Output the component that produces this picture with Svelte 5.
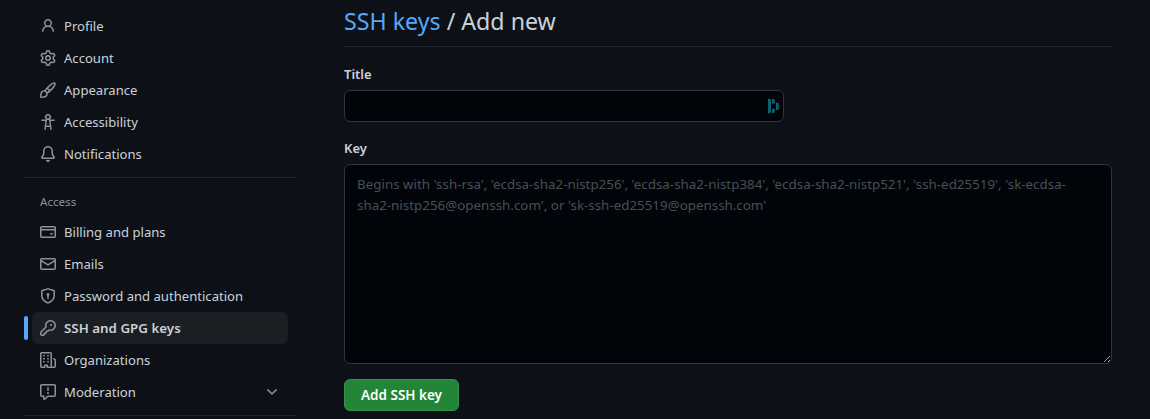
<script>
  const account = [
    { label: 'Profile', icon: 'M10.561 8.073a6.005 6.005 0 0 1 3.432 5.142.75.75 0 1 1-1.498.07 4.5 4.5 0 0 0-8.99 0 .75.75 0 0 1-1.498-.07 6.004 6.004 0 0 1 3.431-5.142 3.999 3.999 0 1 1 5.123 0ZM10.5 5a2.5 2.5 0 1 0-5 0 2.5 2.5 0 0 0 5 0Z' },
    { label: 'Account', icon: 'M8 0a8.2 8.2 0 0 1 .701.031C9.444.095 9.99.645 10.16 1.29l.288 1.107c.018.066.079.158.212.224.231.114.454.243.668.386.123.082.233.09.299.071l1.103-.303c.644-.176 1.392.021 1.82.63.27.385.506.792.704 1.218.315.675.111 1.422-.364 1.891l-.814.806c-.049.048-.098.147-.088.294.016.257.016.515 0 .772-.01.147.038.246.088.294l.814.806c.475.469.679 1.216.364 1.891a7.977 7.977 0 0 1-.704 1.217c-.428.61-1.176.807-1.82.63l-1.102-.302c-.067-.019-.177-.011-.3.071a5.909 5.909 0 0 1-.668.386c-.133.066-.194.158-.211.224l-.29 1.106c-.168.646-.715 1.196-1.458 1.26a8.006 8.006 0 0 1-1.402 0c-.743-.064-1.289-.614-1.458-1.26l-.289-1.106c-.018-.066-.079-.158-.212-.224a5.738 5.738 0 0 1-.668-.386c-.123-.082-.233-.09-.299-.071l-1.103.303c-.644.176-1.392-.021-1.82-.63a8.12 8.12 0 0 1-.704-1.218c-.315-.675-.111-1.422.363-1.891l.815-.806c.05-.048.098-.147.088-.294a6.214 6.214 0 0 1 0-.772c.01-.147-.038-.246-.088-.294l-.815-.806C.635 6.045.431 5.298.746 4.623a7.92 7.92 0 0 1 .704-1.217c.428-.61 1.176-.807 1.82-.63l1.102.302c.067.019.177.011.3-.071.214-.143.437-.272.668-.386.133-.066.194-.158.211-.224l.29-1.106C6.009.645 6.556.095 7.299.03 7.53.01 7.764 0 8 0Zm-.571 1.525c-.036.003-.108.036-.137.146l-.289 1.105c-.147.561-.549.967-.998 1.189-.173.086-.34.183-.5.29-.417.278-.97.423-1.529.27l-1.103-.303c-.109-.03-.175.016-.195.045-.22.312-.412.644-.573.99-.014.031-.021.11.059.19l.815.806c.411.406.562.957.53 1.456a4.709 4.709 0 0 0 0 .582c.032.499-.119 1.05-.53 1.456l-.815.806c-.081.08-.073.159-.059.19.162.346.353.677.573.989.02.03.085.076.195.046l1.102-.303c.56-.153 1.113-.008 1.53.27.161.107.328.204.501.29.447.222.85.629.997 1.189l.289 1.105c.029.109.101.143.137.146a6.6 6.6 0 0 0 1.142 0c.036-.003.108-.036.137-.146l.289-1.105c.147-.561.549-.967.998-1.189.173-.086.34-.183.5-.29.417-.278.97-.423 1.529-.27l1.103.303c.109.029.175-.016.195-.045.22-.313.411-.644.573-.99.014-.031.021-.11-.059-.19l-.815-.806c-.411-.406-.562-.957-.53-1.456a4.709 4.709 0 0 0 0-.582c-.032-.499.119-1.05.53-1.456l.815-.806c.081-.08.073-.159.059-.19a6.464 6.464 0 0 0-.573-.989c-.02-.03-.085-.076-.195-.046l-1.102.303c-.56.153-1.113.008-1.53-.27a4.44 4.44 0 0 0-.501-.29c-.447-.222-.85-.629-.997-1.189l-.289-1.105c-.029-.11-.101-.143-.137-.146a6.6 6.6 0 0 0-1.142 0ZM11 8a3 3 0 1 1-6 0 3 3 0 0 1 6 0ZM9.5 8a1.5 1.5 0 1 0-3.001.001A1.5 1.5 0 0 0 9.5 8Z' },
    { label: 'Appearance', icon: 'M11.134 1.535c.7-.509 1.416-.942 2.076-1.155.649-.21 1.463-.267 2.069.34.603.601.568 1.411.368 2.07-.202.668-.624 1.39-1.125 2.096-1.011 1.424-2.496 2.987-3.775 4.249-1.098 1.084-2.132 1.839-3.04 2.3a3.744 3.744 0 0 1-1.055 3.217c-.431.431-1.065.691-1.657.861-.614.177-1.294.287-1.914.357A21.151 21.151 0 0 1 .797 16H.743l.007-.75H.749L.742 16a.75.75 0 0 1-.743-.742l.743-.008-.742.007v-.054a21.25 21.25 0 0 1 .13-2.284c.067-.647.187-1.287.358-1.914.17-.591.43-1.226.86-1.657a3.746 3.746 0 0 1 3.227-1.054c.466-.893 1.225-1.907 2.314-2.982 1.271-1.255 2.833-2.75 4.246-3.777ZM1.62 13.089c-.051.464-.086.929-.104 1.395.466-.018.932-.053 1.396-.104a10.511 10.511 0 0 0 1.668-.309c.526-.151.856-.325 1.011-.48a2.25 2.25 0 1 0-3.182-3.182c-.155.155-.329.485-.48 1.01a10.515 10.515 0 0 0-.309 1.67Zm10.396-10.34c-1.224.89-2.605 2.189-3.822 3.384l1.718 1.718c1.21-1.205 2.51-2.597 3.387-3.833.47-.662.78-1.227.912-1.662.134-.444.032-.551.009-.575h-.001V1.78c-.014-.014-.113-.113-.548.027-.432.14-.995.462-1.655.942Zm-4.832 7.266-.001.001a9.859 9.859 0 0 0 1.63-1.142L7.155 7.216a9.7 9.7 0 0 0-1.161 1.607c.482.302.889.71 1.19 1.192Z' },
    { label: 'Accessibility', icon: 'M9.923 5.302c.063.063.122.129.178.198H14A.75.75 0 0 1 14 7h-3.3l.578 5.163.362 2.997a.75.75 0 0 1-1.49.18L9.868 13H6.132l-.282 2.34a.75.75 0 0 1-1.49-.18l.362-2.997L5.3 7H2a.75.75 0 0 1 0-1.5h3.9a2.54 2.54 0 0 1 .176-.198 3 3 0 1 1 3.847 0ZM9.2 7.073h-.001a1.206 1.206 0 0 0-2.398 0L6.305 11.5h3.39ZM9.5 3a1.5 1.5 0 1 0-3.001.001A1.5 1.5 0 0 0 9.5 3Z' },
    { label: 'Notifications', icon: 'M8 16a2 2 0 0 0 1.985-1.75c.017-.137-.097-.25-.235-.25h-3.5c-.138 0-.252.113-.235.25A2 2 0 0 0 8 16ZM3 5a5 5 0 0 1 10 0v2.947c0 .05.015.098.042.139l1.703 2.555A1.519 1.519 0 0 1 13.482 13H2.518a1.516 1.516 0 0 1-1.263-2.36l1.703-2.554A.255.255 0 0 0 3 7.947Zm5-3.5A3.5 3.5 0 0 0 4.5 5v2.947c0 .346-.102.683-.294.97l-1.703 2.556a.017.017 0 0 0-.003.01l.001.006c0 .002.002.004.004.006l.006.004.007.001h10.964l.007-.001.006-.004.004-.006.001-.007a.017.017 0 0 0-.003-.01l-1.703-2.554a1.745 1.745 0 0 1-.294-.97V5A3.5 3.5 0 0 0 8 1.5Z' }
  ];

  const access = [
    { label: 'Billing and plans', icon: 'M10.75 9a.75.75 0 0 0 0 1.5h1.5a.75.75 0 0 0 0-1.5h-1.5ZM0 3.75C0 2.784.784 2 1.75 2h12.5c.966 0 1.75.784 1.75 1.75v8.5A1.75 1.75 0 0 1 14.25 14H1.75A1.75 1.75 0 0 1 0 12.25ZM14.5 6.5h-13v5.75c0 .138.112.25.25.25h12.5a.25.25 0 0 0 .25-.25Zm0-2.75a.25.25 0 0 0-.25-.25H1.75a.25.25 0 0 0-.25.25V5h13Z' },
    { label: 'Emails', icon: 'M1.75 2h12.5c.966 0 1.75.784 1.75 1.75v8.5A1.75 1.75 0 0 1 14.25 14H1.75A1.75 1.75 0 0 1 0 12.25v-8.5C0 2.784.784 2 1.75 2ZM1.5 12.251c0 .138.112.25.25.25h12.5a.25.25 0 0 0 .25-.25V5.809L8.38 9.397a.75.75 0 0 1-.76 0L1.5 5.809v6.442Zm13-8.181v-.32a.25.25 0 0 0-.25-.25H1.75a.25.25 0 0 0-.25.25v.32L8 7.88Z' },
    { label: 'Password and authentication', icon: 'm8.533.133 5.25 1.68A1.75 1.75 0 0 1 15 3.48V7c0 1.566-.32 3.182-1.303 4.682-.983 1.498-2.585 2.813-5.032 3.855a1.697 1.697 0 0 1-1.33 0c-2.447-1.042-4.049-2.357-5.032-3.855C1.32 10.182 1 8.566 1 7V3.48a1.75 1.75 0 0 1 1.217-1.667l5.25-1.68a1.748 1.748 0 0 1 1.066 0Zm-.61 1.429.001.001-5.25 1.68a.251.251 0 0 0-.174.237V7c0 1.36.275 2.666 1.057 3.859.784 1.194 2.121 2.342 4.366 3.298a.196.196 0 0 0 .154 0c2.245-.957 3.582-2.103 4.366-3.297C13.225 9.666 13.5 8.358 13.5 7V3.48a.25.25 0 0 0-.174-.238l-5.25-1.68a.25.25 0 0 0-.153 0ZM9.5 6.5c0 .536-.286 1.032-.75 1.3v2.45a.75.75 0 0 1-1.5 0V7.8A1.5 1.5 0 1 1 9.5 6.5Z' },
    { label: 'SSH and GPG keys', current: true, icon: 'M10.5 0a5.499 5.499 0 1 1-1.288 10.848l-.932.932a.749.749 0 0 1-.53.22H7v.75a.749.749 0 0 1-.22.53l-.5.5a.749.749 0 0 1-.53.22H5v.75a.749.749 0 0 1-.22.53l-.5.5a.749.749 0 0 1-.53.22h-2A1.75 1.75 0 0 1 0 14.25v-2c0-.199.079-.389.22-.53l4.932-4.932A5.5 5.5 0 0 1 10.5 0Zm-4 5.5c-.001.431.069.86.205 1.269a.75.75 0 0 1-.181.768L1.5 12.56v1.69c0 .138.112.25.25.25h1.69l.06-.06v-1.19a.75.75 0 0 1 .75-.75h1.19l.06-.06v-1.19a.75.75 0 0 1 .75-.75h1.19l1.023-1.025a.75.75 0 0 1 .768-.18A4 4 0 1 0 6.5 5.5ZM11 6a1 1 0 1 1 0-2 1 1 0 0 1 0 2Z' },
    { label: 'Organizations', icon: 'M1.75 16A1.75 1.75 0 0 1 0 14.25V1.75C0 .784.784 0 1.75 0h8.5C11.216 0 12 .784 12 1.75v12.5c0 .085-.006.168-.018.25h2.268a.25.25 0 0 0 .25-.25V8.285a.25.25 0 0 0-.111-.208l-1.055-.703a.749.749 0 1 1 .832-1.248l1.055.703c.487.325.779.871.779 1.456v5.965A1.75 1.75 0 0 1 14.25 16h-3.5a.766.766 0 0 1-.197-.026c-.099.017-.2.026-.303.026h-3a.75.75 0 0 1-.75-.75V14h-1v1.25a.75.75 0 0 1-.75.75Zm-.25-1.75c0 .138.112.25.25.25H4v-1.25a.75.75 0 0 1 .75-.75h2.5a.75.75 0 0 1 .75.75v1.25h2.25a.25.25 0 0 0 .25-.25V1.75a.25.25 0 0 0-.25-.25h-8.5a.25.25 0 0 0-.25.25ZM3.75 6h.5a.75.75 0 0 1 0 1.5h-.5a.75.75 0 0 1 0-1.5ZM3 3.75A.75.75 0 0 1 3.75 3h.5a.75.75 0 0 1 0 1.5h-.5A.75.75 0 0 1 3 3.75Zm4 3A.75.75 0 0 1 7.75 6h.5a.75.75 0 0 1 0 1.5h-.5A.75.75 0 0 1 7 6.75ZM7.75 3h.5a.75.75 0 0 1 0 1.5h-.5a.75.75 0 0 1 0-1.5ZM3 9.75A.75.75 0 0 1 3.75 9h.5a.75.75 0 0 1 0 1.5h-.5A.75.75 0 0 1 3 9.75ZM7.75 9h.5a.75.75 0 0 1 0 1.5h-.5a.75.75 0 0 1 0-1.5Z' },
    { label: 'Moderation', expandable: true, icon: 'M0 1.75C0 .784.784 0 1.75 0h12.5C15.216 0 16 .784 16 1.75v9.5A1.75 1.75 0 0 1 14.25 13H8.06l-2.573 2.573A1.458 1.458 0 0 1 3 14.543V13H1.75A1.75 1.75 0 0 1 0 11.25Zm1.75-.25a.25.25 0 0 0-.25.25v9.5c0 .138.112.25.25.25h2a.75.75 0 0 1 .75.75v2.19l2.72-2.72a.749.749 0 0 1 .53-.22h6.5a.25.25 0 0 0 .25-.25v-9.5a.25.25 0 0 0-.25-.25Zm7 2.25v2.5a.75.75 0 0 1-1.5 0v-2.5a.75.75 0 0 1 1.5 0ZM9 9a1 1 0 1 1-2 0 1 1 0 0 1 2 0Z' }
  ];

  const chevron = 'M12.78 5.22a.749.749 0 0 1 0 1.06l-4.25 4.25a.749.749 0 0 1-1.06 0L3.22 6.28a.749.749 0 1 1 1.06-1.06L8 8.939l3.72-3.719a.749.749 0 0 1 1.06 0Z';
  const placeholder = "Begins with 'ssh-rsa', 'ecdsa-sha2-nistp256', 'ecdsa-sha2-nistp384', 'ecdsa-sha2-nistp521', 'ssh-ed25519', 'sk-ecdsa-sha2-nistp256@openssh.com', or 'sk-ssh-ed25519@openssh.com'";
</script>

{#snippet icon(d)}
  <svg class="icon" width="16" height="16" viewBox="0 0 16 16" aria-hidden="true"><path {d} /></svg>
{/snippet}

{#snippet navList(items)}
  <ul>
    {#each items as item}
      <li class:current={item.current}>
        {@render icon(item.icon)}
        <span class="label">{item.label}</span>
        {#if item.expandable}{@render icon(chevron)}{/if}
      </li>
    {/each}
  </ul>
{/snippet}

<div class="page">
  <nav>
    {@render navList(account)}
    <hr />
    <h3>Access</h3>
    {@render navList(access)}
    <hr />
  </nav>

  <main>
    <h2><a href="#keys">SSH keys</a> / Add new</h2>
    <label for="title">Title</label>
    <div class="field">
      <input id="title" type="text" />
      <svg class="manager" width="11" height="16" viewBox="0 0 11 16" aria-hidden="true">
        <path d="M0 1 .5.6 3 1.4v13.2l-2.5.8L0 15zM4 1l.5-.3L6.8 1.5V5.2L4 5.8zM8 4.4l2.8.8v6.2L8 12.2zM4 10.4l2.8.5v3.7l-2.3.7L4 15z" />
      </svg>
    </div>
    <label for="key">Key</label>
    <textarea id="key" {placeholder}></textarea>
    <button type="button">Add SSH key</button>
  </main>
</div>

<style>
  :global(body) {
    background: #0d1117;
    overflow: hidden;
  }

  .page {
    display: flex;
    gap: 48px;
    box-sizing: border-box;
    height: 419px;
    overflow: hidden;
    padding-left: 24px;
    color: #c9d1d9;
    font: 13.36px/20px 'Segoe UI', 'Noto Sans', sans-serif;
  }

  nav {
    flex: none;
    width: 272px;
    padding-top: 10px;
  }

  ul {
    list-style: none;
    margin: 0;
    padding: 0 8px;
  }

  li {
    position: relative;
    display: flex;
    align-items: center;
    gap: 8px;
    box-sizing: border-box;
    height: 32px;
    padding: 0 8px;
    border-radius: 6px;
    font-size: 13.1px;
  }

  .label {
    flex: 1;
    white-space: nowrap;
  }

  .current {
    background: #1b1f23;
    font-size: 13.35px;
    font-weight: 600;
  }

  .current::before {
    content: '';
    position: absolute;
    left: -8px;
    top: 4px;
    width: 4px;
    height: 24px;
    border-radius: 6px;
    background: #58a6ff;
  }

  .icon {
    flex: none;
    fill: #8b949e;
  }

  hr {
    height: 1px;
    margin: 7px 0 0;
    border: 0;
    background: #21262d;
  }

  h3 {
    margin: 0;
    padding: 15px 16px 5px;
    color: #8b949e;
    font-size: 11.6px;
    font-weight: 400;
    line-height: 18px;
  }

  main {
    display: flex;
    flex-direction: column;
    align-items: flex-start;
    width: 768px;
  }

  h2 {
    align-self: stretch;
    margin: 0 0 17px;
    padding: 3px 0 7px;
    border-bottom: 1px solid #21262d;
    font-size: 23.2px;
    font-weight: 400;
    line-height: 36px;
  }

  a {
    color: #58a6ff;
    text-decoration: none;
  }

  label {
    margin-bottom: 6px;
    font-size: 13px;
    font-weight: 600;
  }

  .field {
    display: flex;
    align-items: center;
    box-sizing: border-box;
    width: 440px;
    height: 32px;
    margin-bottom: 16px;
    padding: 0 4px 0 12px;
    border: 1px solid #30363d;
    border-radius: 6px;
    background: #010409;
  }

  input {
    flex: 1;
    border: 0;
    outline: 0;
    background: none;
    color: inherit;
    font: inherit;
  }

  .manager {
    fill: #0e6174;
  }

  textarea {
    display: block;
    box-sizing: border-box;
    width: 768px;
    height: 200px;
    margin-bottom: 15px;
    padding: 9px 12px 7px;
    border: 1px solid #30363d;
    border-radius: 6px;
    outline: 0;
    background: #010409;
    color: #c9d1d9;
    color-scheme: dark;
    font: inherit;
    line-height: 21px;
    resize: vertical;
  }

  textarea::placeholder {
    color: #484f58;
  }

  button {
    height: 32px;
    padding: 0 16px;
    border: 1px solid #38914a;
    border-radius: 6px;
    background: #238636;
    color: #fff;
    font: inherit;
    font-size: 13.5px;
    font-weight: 600;
  }
</style>
